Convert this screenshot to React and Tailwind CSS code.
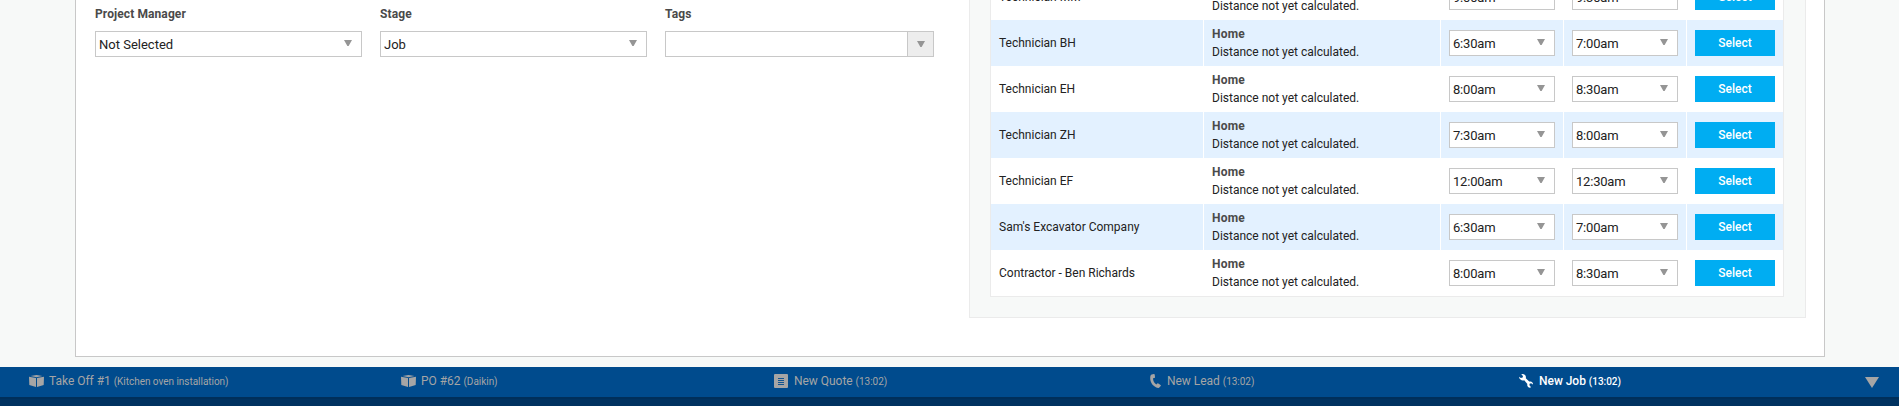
const rows = [
  ["Technician MM", "9:00am", "9:30am"],
  ["Technician BH", "6:30am", "7:00am"],
  ["Technician EH", "8:00am", "8:30am"],
  ["Technician ZH", "7:30am", "8:00am"],
  ["Technician EF", "12:00am", "12:30am"],
  ["Sam's Excavator Company", "6:30am", "7:00am"],
  ["Contractor - Ben Richards", "8:00am", "8:30am"],
];

function Caret({ className = "" }) {
  return (
    <svg viewBox="0 0 8 6" className={`h-[6px] w-[8px] shrink-0 fill-[#959595] ${className}`}>
      <path d="M0 0h8L4.6 6H3.4z" />
    </svg>
  );
}

function Select({ value, className = "", caret }) {
  return (
    <div className={`flex h-[26px] items-center justify-between border border-[#c8c8c8] bg-white pl-[3px] text-[13px] leading-[24px] text-[#222] ${className}`}>
      <span className="pt-[2px]">{value}</span>
      <Caret className={caret} />
    </div>
  );
}

function Field({ label, children, className }) {
  return (
    <div className={className}>
      <div className="mb-[9px] h-[16px] text-[12px] leading-[16px] font-bold tracking-[0.1px] text-[#4a4a4a]">{label}</div>
      {children}
    </div>
  );
}

function Row({ row, striped }) {
  const bg = striped ? "bg-[#e3f1ff]" : "bg-white";
  return (
    <div className="grid h-[46px] shrink-0 grid-cols-[212px_236px_122px_122px_96px] gap-x-px bg-white text-[12px] text-[#222]">
      <div className={`flex items-center pl-[8px] ${bg}`}>{row[0]}</div>
      <div className={`pt-[5px] pl-[8px] leading-[18px] ${bg}`}>
        <div className="font-bold tracking-[0.2px] text-[#4a4a4a]">Home</div>
        <div>Distance not yet calculated.</div>
      </div>
      <div className={`px-[8px] py-[10px] ${bg}`}>
        <Select value={row[1]} className="w-[106px] tracking-[-0.2px]" caret="mr-[9px] -mt-[3px]" />
      </div>
      <div className={`px-[8px] py-[10px] ${bg}`}>
        <Select value={row[2]} className="w-[106px] tracking-[-0.2px]" caret="mr-[9px] -mt-[3px]" />
      </div>
      <div className={`px-[8px] py-[10px] ${bg}`}>
        <button className="block h-[26px] w-[80px] bg-[#00adf2] text-center text-[12px] leading-[26px] font-medium text-white">Select</button>
      </div>
    </div>
  );
}

function BoxIcon() {
  return (
    <svg viewBox="0 0 15 12" className="h-[12px] w-[15px] fill-current">
      <path d="M7.500 0L13.500 1L7.500 2.200L1.500 1zM0 1.700L7 3.100V12L.3 10zM15 1.700L8 3.100V12L14.700 10z" />
    </svg>
  );
}

function DocIcon() {
  return (
    <svg viewBox="0 0 14 14" className="h-[14px] w-[14px]">
      <rect width="14" height="14" rx="1" fill="currentColor" />
      <path d="M4 4.500h6M4 6.500h6M4 8.500h6M4 10.500h6" stroke="#004b8d" strokeWidth="0.9" />
    </svg>
  );
}

function PhoneIcon() {
  return (
    <svg viewBox="0 0 11 14" className="h-[14px] w-[11px] fill-current">
      <path d="M1.600.4L4 0Q4.600 0 4.700.6L5 3.200Q5 3.800 4.400 3.900L3 4.200Q3.200 8.400 6.300 10.400L7.300 9.500Q7.800 9.100 8.300 9.500L10.600 11Q11.100 11.400 10.700 11.900L9.300 13.600Q8.900 14.100 8.100 13.900C3.200 12.700.3 8.900.2 4.200C.2 2.200.5.700 1.600.4z" />
    </svg>
  );
}

function WrenchIcon() {
  return (
    <svg viewBox="0 0 14 14" className="h-[14px] w-[14px] fill-current">
      <path d="M2.200.2Q4.500-.4 6 1q1.300 1.400.8 3.200l3.400 3.400q2-.6 3.200.8.700.9.600 2.200l-1.900-1.300-1.500.4-.2 1.500 1.700 2.100q-1.500.9-3 -.2-1.300-1.200-.7-3.200L5.200 6.200q-2 .7-3.700-.6Q.2 4.500 0 2.700L1.900 4l1.700-.4.4-1.600z" />
    </svg>
  );
}

function Tab({ icon, title, note, className = "text-[#a5a5a5]", gap = "gap-[6px]" }) {
  return (
    <div className={`flex h-[28px] items-center ${gap} ${className}`}>
      {icon}
      <div className="text-[12px] leading-[28px] tracking-[-0.03px] whitespace-nowrap">
        {title} <span className="text-[10px]">{note}</span>
      </div>
    </div>
  );
}

export default function App() {
  return (
    <div className="flex h-[406px] w-[1899px] flex-col overflow-hidden bg-[#f7f9f8] font-['Roboto',sans-serif]">
      <div className="mb-[10px] ml-[75px] flex h-[357px] w-[1750px] shrink-0 border-x border-b border-[#c8c8c8] bg-white">
        <div className="flex w-[893px] gap-[18px] pt-[6px] pl-[19px]">
          <Field label="Project Manager" className="w-[267px]">
            <Select value="Not Selected" caret="mr-[9px] -mt-[3px]" />
          </Field>
          <Field label="Stage" className="w-[267px]">
            <Select value="Job" caret="mr-[9px] -mt-[3px]" />
          </Field>
          <Field label="Tags" className="w-[269px]">
            <div className="flex h-[26px] border border-[#c8c8c8]">
              <div className="flex-1" />
              <div className="flex w-[26px] items-center justify-center border-l border-[#c8c8c8] bg-[#ededed]">
                <Caret />
              </div>
            </div>
          </Field>
        </div>
        <div className="h-[318px] w-[837px] border-x border-b border-[#ebebeb] bg-[#f7f9f8] px-[20px]">
          <div className="flex h-[297px] w-[794px] flex-col justify-end overflow-hidden border-x border-b border-[#ebebeb]">
            {rows.map((row, i) => (
              <Row key={row[0]} row={row} striped={i % 2 === 1} />
            ))}
          </div>
        </div>
      </div>
      <div className="flex h-[30px] shrink-0 bg-[#004b8d] pl-[29px]">
        <div className="w-[372px]"><Tab icon={<BoxIcon />} title="Take Off #1" note="(Kitchen oven installation)" gap="gap-[5px]" /></div>
        <div className="w-[373px]"><Tab icon={<BoxIcon />} title="PO #62" note="(Daikin)" gap="gap-[5px]" /></div>
        <div className="w-[376px]"><Tab icon={<DocIcon />} title="New Quote" note="(13:02)" /></div>
        <div className="w-[369px]"><Tab icon={<PhoneIcon />} title="New Lead" note="(13:02)" /></div>
        <div className="w-[346px]"><Tab icon={<WrenchIcon />} title="New Job" note="(13:02)" className="font-medium text-white" /></div>
        <svg viewBox="0 0 14 11" className="mt-[10px] h-[11px] w-[14px] fill-[#a5a5a5]">
          <path d="M0 0h14L7 11z" />
        </svg>
      </div>
      <div className="h-[9px] shrink-0 border-t-2 border-[#002f5a] bg-[#003260]" />
    </div>
  );
}
